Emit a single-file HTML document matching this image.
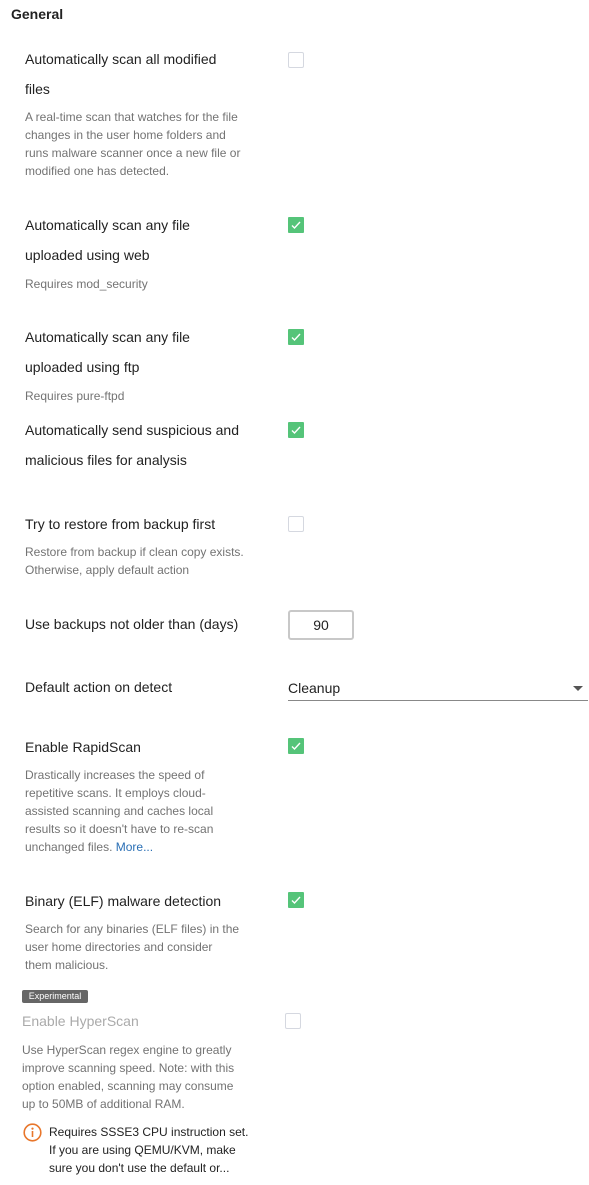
<!DOCTYPE html>
<html><head><meta charset="utf-8"><style>
body{margin:0;width:589px;height:1185px;background:#fff;font-family:"Liberation Sans",sans-serif;color:#222;position:relative;overflow:hidden}
.a{position:absolute;white-space:nowrap}
.l{font-size:14px;line-height:30px;color:#222}
.d{font-size:12px;line-height:18px;color:#737373}
.cb{position:absolute;left:288px;width:14px;height:14px;border:1px solid #d5d8e0;border-radius:2px;background:#fff}
.ck{position:absolute;left:288px;width:16px;height:16px;background:#55c479;border-radius:1px}
.ck svg{position:absolute;left:2px;top:2px}
</style></head><body>
<div class="a" style="left:11px;top:5px;font-size:14px;font-weight:bold;line-height:18px">General</div>

<div class="a l" style="left:25px;top:44px">Automatically scan all modified<br>files</div>
<div class="cb" style="top:52px"></div>
<div class="a d" style="left:25px;top:108px">A real-time scan that watches for the file<br>changes in the user home folders and<br>runs malware scanner once a new file or<br>modified one has detected.</div>

<div class="a l" style="left:25px;top:210px">Automatically scan any file<br>uploaded using web</div>
<div class="ck" style="top:217px"><svg width="12" height="12" viewBox="0 0 12 12"><path d="M2 6.5l2.5 2.5 5.5-6" stroke="#fff" stroke-width="1.4" fill="none"/></svg></div>
<div class="a d" style="left:25px;top:275px">Requires mod_security</div>

<div class="a l" style="left:25px;top:322px">Automatically scan any file<br>uploaded using ftp</div>
<div class="ck" style="top:329px"><svg width="12" height="12" viewBox="0 0 12 12"><path d="M2 6.5l2.5 2.5 5.5-6" stroke="#fff" stroke-width="1.4" fill="none"/></svg></div>
<div class="a d" style="left:25px;top:387px">Requires pure-ftpd</div>

<div class="a l" style="left:25px;top:415px">Automatically send suspicious and<br>malicious files for analysis</div>
<div class="ck" style="top:422px"><svg width="12" height="12" viewBox="0 0 12 12"><path d="M2 6.5l2.5 2.5 5.5-6" stroke="#fff" stroke-width="1.4" fill="none"/></svg></div>

<div class="a l" style="left:25px;top:509px">Try to restore from backup first</div>
<div class="cb" style="top:516px"></div>
<div class="a d" style="left:25px;top:543px">Restore from backup if clean copy exists.<br>Otherwise, apply default action</div>

<div class="a l" style="left:25px;top:609px">Use backups not older than (days)</div>
<div class="a" style="left:288px;top:610px;width:62px;height:26px;border:2px solid #c8c8c8;border-radius:3px;font-size:14px;line-height:26px;text-align:center">90</div>

<div class="a l" style="left:25px;top:672px">Default action on detect</div>
<div class="a" style="left:288px;top:678px;width:300px;height:22px;border-bottom:1px solid #888;font-size:14px;line-height:20px">Cleanup</div>
<div class="a" style="left:573px;top:686px;width:0;height:0;border-left:5px solid transparent;border-right:5px solid transparent;border-top:5px solid #555"></div>

<div class="a l" style="left:25px;top:732px">Enable RapidScan</div>
<div class="ck" style="top:738px"><svg width="12" height="12" viewBox="0 0 12 12"><path d="M2 6.5l2.5 2.5 5.5-6" stroke="#fff" stroke-width="1.4" fill="none"/></svg></div>
<div class="a d" style="left:25px;top:766px">Drastically increases the speed of<br>repetitive scans. It employs cloud-<br>assisted scanning and caches local<br>results so it doesn't have to re-scan<br>unchanged files. <span style="color:#2a6fb5">More...</span></div>

<div class="a l" style="left:25px;top:886px">Binary (ELF) malware detection</div>
<div class="ck" style="top:892px"><svg width="12" height="12" viewBox="0 0 12 12"><path d="M2 6.5l2.5 2.5 5.5-6" stroke="#fff" stroke-width="1.4" fill="none"/></svg></div>
<div class="a d" style="left:25px;top:920px">Search for any binaries (ELF files) in the<br>user home directories and consider<br>them malicious.</div>

<div class="a" style="left:22px;top:990px;width:66px;height:13px;background:#666;border-radius:2px;color:#fff;font-size:9px;line-height:13px;text-align:center">Experimental</div>
<div class="a l" style="left:22px;top:1006px;color:#aaa">Enable HyperScan</div>
<div class="cb" style="left:285px;top:1013px"></div>
<div class="a d" style="left:22px;top:1041px">Use HyperScan regex engine to greatly<br>improve scanning speed. Note: with this<br>option enabled, scanning may consume<br>up to 50MB of additional RAM.</div>
<svg class="a" style="left:23px;top:1123px" width="19" height="19" viewBox="0 0 19 19"><circle cx="9.5" cy="9.5" r="8.3" stroke="#e8762b" stroke-width="1.6" fill="none"/><circle cx="9.5" cy="5.6" r="1.1" fill="#e8762b"/><rect x="8.7" y="8" width="1.6" height="6" fill="#e8762b"/></svg>
<div class="a" style="left:49px;top:1123px;font-size:12px;line-height:18px;color:#222">Requires SSSE3 CPU instruction set.<br>If you are using QEMU/KVM, make<br>sure you don't use the default or...</div>
</body></html>
